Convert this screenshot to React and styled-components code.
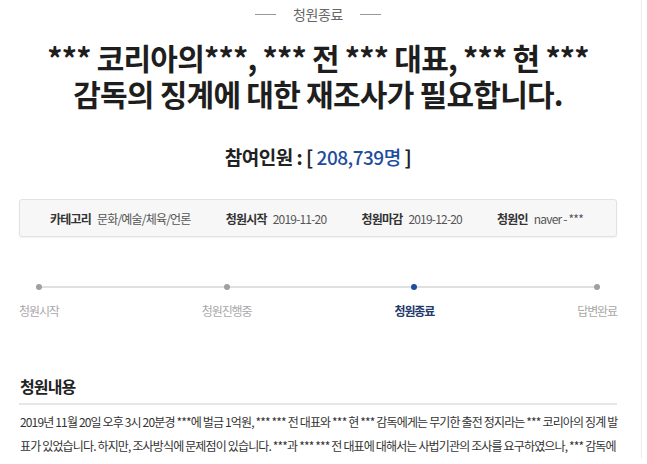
import React from "react";
import styled, { createGlobalStyle } from "styled-components";

const GlobalStyle = createGlobalStyle`
  html, body {
    margin: 0;
    padding: 0;
    background: #ffffff;
  }
  body {
    font-family: "Noto Sans CJK KR", "Noto Sans", sans-serif;
    color: #333333;
    overflow: hidden;
  }
`;

export const Page = styled.div`
  display: flex;
  width: 647px;
  height: 464px;
  overflow: hidden;
`;

export const Main = styled.div`
  width: 598px;
  margin-left: 19px;
  display: flex;
  flex-direction: column;
`;

export const Side = styled.div`
  margin-left: auto;
  margin-right: 5px;
  width: 1px;
  height: 458px;
  background: #ececec;
`;

export const Status = styled.div`
  display: flex;
  align-items: center;
  justify-content: center;
  gap: 17px;
  height: 28px;
  font-size: 14px;
  color: #666666;
  letter-spacing: -0.4px;
`;

export const Dash = styled.span`
  width: 21px;
  height: 1px;
  background: #999999;
`;

export const Title = styled.h1`
  margin: 11px 0 0;
  font-size: 30px;
  font-weight: 700;
  line-height: 36px;
  color: #1e1e1e;
  text-align: center;
  white-space: nowrap;
  letter-spacing: -0.75px;
`;

export const Count = styled.div`
  margin-top: 34px;
  font-size: 19px;
  font-weight: 700;
  line-height: 24px;
  color: #222222;
  text-align: center;
  letter-spacing: -0.5px;
`;

export const Num = styled.span`
  color: #1d4e9c;
  font-weight: 500;
`;

export const InfoBox = styled.div`
  margin-top: 30px;
  height: 38px;
  box-sizing: border-box;
  display: flex;
  align-items: center;
  justify-content: space-between;
  padding: 0 33px 0 30px;
  background: #f7f7f7;
  border: 1px solid #e2e2e2;
  border-radius: 3px;
  box-shadow: 0 1px 2px rgba(0, 0, 0, 0.06);
`;

export const InfoItem = styled.div`
  display: flex;
  align-items: baseline;
  gap: 6px;
  font-size: 12px;
  white-space: nowrap;
  letter-spacing: -0.8px;
`;

export const InfoLabel = styled.span`
  font-weight: 700;
  color: #333333;
`;

export const InfoValue = styled.span`
  color: #555555;
`;

export const Steps = styled.div`
  position: relative;
  margin-top: 47px;
  display: flex;
  justify-content: space-between;
  &::before {
    content: "";
    position: absolute;
    left: 20px;
    right: 20px;
    top: 2px;
    height: 2px;
    background: #e0e0e0;
  }
`;

export const Step = styled.div`
  position: relative;
  display: flex;
  flex-direction: column;
  align-items: center;
  gap: 13px;
`;

export const Dot = styled.span`
  width: 6px;
  height: 6px;
  border-radius: 50%;
  background: ${(p) => (p.$active ? "#1d4e9c" : "#a0a0a0")};
`;

export const StepLabel = styled.span`
  font-size: 12px;
  line-height: 16px;
  white-space: nowrap;
  letter-spacing: -1.1px;
  color: ${(p) => (p.$active ? "#24386b" : "#a8a8a8")};
  font-weight: ${(p) => (p.$active ? 700 : 400)};
`;

export const SectionTitle = styled.h2`
  margin: 56px 0 0;
  padding: 0 0 6px 1px;
  font-size: 16px;
  font-weight: 700;
  line-height: 22px;
  color: #222222;
  letter-spacing: -0.9px;
  border-bottom: 2px solid #e6e6e6;
`;

export const Body = styled.p`
  margin: 5px 0 0 1px;
  font-size: 12px;
  line-height: 24px;
  color: #333333;
  white-space: nowrap;
  letter-spacing: -0.85px;
`;

const info = [
  ["카테고리", "문화/예술/체육/언론"],
  ["청원시작", "2019-11-20"],
  ["청원마감", "2019-12-20"],
  ["청원인", "naver - ***"],
];

const steps = ["청원시작", "청원진행중", "청원종료", "답변완료"];

const App = () => {
  return (
    <Page>
      <GlobalStyle />
      <Main>
        <Status>
          <Dash />
          청원종료
          <Dash />
        </Status>
        <Title>
          *** 코리아의***, *** 전 *** 대표, *** 현 ***
          <br />
          감독의 징계에 대한 재조사가 필요합니다.
        </Title>
        <Count>
          참여인원 : [ <Num>208,739명</Num> ]
        </Count>
        <InfoBox>
          {info.map(([label, value]) => (
            <InfoItem key={label}>
              <InfoLabel>{label}</InfoLabel>
              <InfoValue>{value}</InfoValue>
            </InfoItem>
          ))}
        </InfoBox>
        <Steps>
          {steps.map((s, i) => (
            <Step key={s}>
              <Dot $active={i === 2} />
              <StepLabel $active={i === 2}>{s}</StepLabel>
            </Step>
          ))}
        </Steps>
        <SectionTitle>청원내용</SectionTitle>
        <Body>
          2019년 11월 20일 오후 3시 20분경 ***에 벌금 1억원, *** *** 전 대표와 *** 현 *** 감독에게는 무기한 출전 정지라는 *** 코리아의 징계 발
          <br />
          표가 있었습니다. 하지만, 조사방식에 문제점이 있습니다. ***과 *** *** 전 대표에 대해서는 사법기관의 조사를 요구하였으나, *** 감독에
        </Body>
      </Main>
      <Side />
    </Page>
  );
};

export default App;
